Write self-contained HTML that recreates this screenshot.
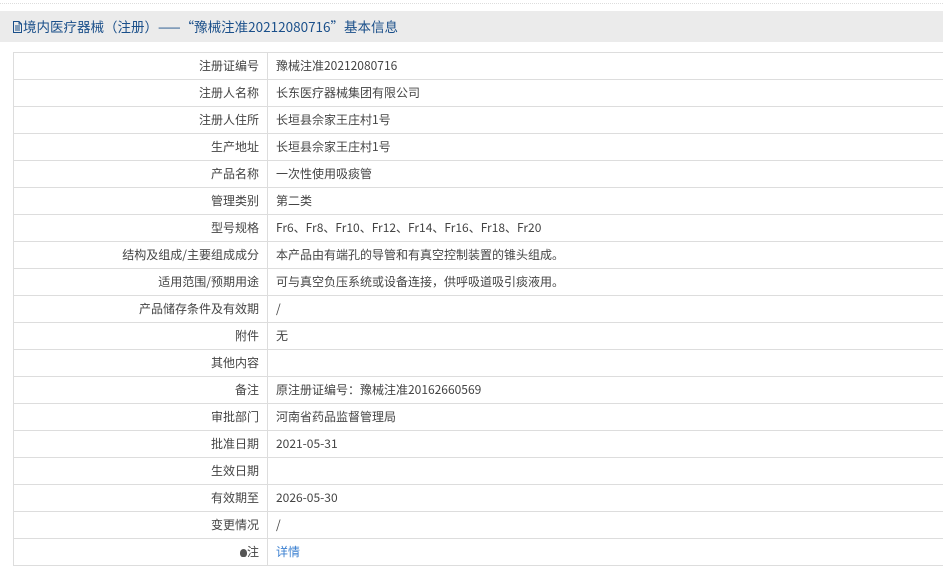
<!DOCTYPE html><html><head><meta charset="utf-8"><style>
body{margin:0;width:943px;height:574px;overflow:hidden;background:#fff;font-family:"Noto Sans CJK SC","Liberation Sans",sans-serif;}
.top{height:3px;border-bottom:1px dotted #ddd;}
.hd{position:absolute;top:11px;left:0;width:943px;height:31px;background:#ebebeb;color:#1a4f8a;font-size:13.5px;line-height:31px;padding-left:12px;box-sizing:border-box}
table{position:absolute;top:52px;left:13px;width:940px;border-collapse:collapse;font-size:12px;color:#444}
td{border:1px solid #ddd;height:26px;padding:0 8px;white-space:nowrap;line-height:14px}
td.l{width:237px;text-align:right}
a{color:#3a7fd0;text-decoration:none}
</style></head><body><div class="top"></div>
<div class="hd"><svg width="11" height="12" viewBox="0 0 11 12" style="vertical-align:-1px"><path d="M1.5 .5h5.5l2.5 2.5v8.5h-8z M7 .5v2.5h2.5 M3 5h5M3 7h5M3 9h5" fill="none" stroke="#1a4f8a" stroke-width="1"/></svg>境内医疗器械（注册）——“豫械注准20212080716”基本信息</div>
<table>
<tr><td class="l">注册证编号</td><td>豫械注准20212080716</td></tr>
<tr><td class="l">注册人名称</td><td>长东医疗器械集团有限公司</td></tr>
<tr><td class="l">注册人住所</td><td>长垣县佘家王庄村1号</td></tr>
<tr><td class="l">生产地址</td><td>长垣县佘家王庄村1号</td></tr>
<tr><td class="l">产品名称</td><td>一次性使用吸痰管</td></tr>
<tr><td class="l">管理类别</td><td>第二类</td></tr>
<tr><td class="l">型号规格</td><td>Fr6、Fr8、Fr10、Fr12、Fr14、Fr16、Fr18、Fr20</td></tr>
<tr><td class="l">结构及组成/主要组成成分</td><td>本产品由有端孔的导管和有真空控制装置的锥头组成。</td></tr>
<tr><td class="l">适用范围/预期用途</td><td>可与真空负压系统或设备连接，供呼吸道吸引痰液用。</td></tr>
<tr><td class="l">产品储存条件及有效期</td><td>/</td></tr>
<tr><td class="l">附件</td><td>无</td></tr>
<tr><td class="l">其他内容</td><td></td></tr>
<tr><td class="l">备注</td><td>原注册证编号：豫械注准20162660569</td></tr>
<tr><td class="l">审批部门</td><td>河南省药品监督管理局</td></tr>
<tr><td class="l">批准日期</td><td>2021-05-31</td></tr>
<tr><td class="l">生效日期</td><td></td></tr>
<tr><td class="l">有效期至</td><td>2026-05-30</td></tr>
<tr><td class="l">变更情况</td><td>/</td></tr>
<tr><td class="l"><span style="display:inline-block;width:7px;height:8px;background:#555;border-radius:50% 50% 40% 40%;vertical-align:-1px"></span>注</td><td><a>详情</a></td></tr>
</table></body></html>
